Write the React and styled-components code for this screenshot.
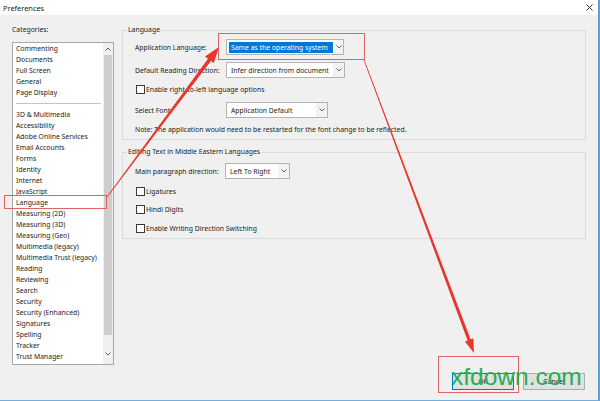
import React from 'react'
import styled, { createGlobalStyle } from 'styled-components'

const GlobalStyle = createGlobalStyle`
  html, body {
    margin: 0;
    padding: 0;
    background: #f0f0f0;
  }
  body {
    font-family: "Noto Sans", "Open Sans", sans-serif;
  }
`

const categories = [
  'Commenting', 'Documents', 'Full Screen', 'General', 'Page Display', '-',
  '3D & Multimedia', 'Accessibility', 'Adobe Online Services', 'Email Accounts',
  'Forms', 'Identity', 'Internet', 'JavaScript', 'Language', 'Measuring (2D)',
  'Measuring (3D)', 'Measuring (Geo)', 'Multimedia (legacy)',
  'Multimedia Trust (legacy)', 'Reading', 'Reviewing', 'Search', 'Security',
  'Security (Enhanced)', 'Signatures', 'Spelling', 'Tracker', 'Trust Manager', 'Units'
]

// tapered arrow, thin at the tail and wider towards the head
function arrowPoints(tail, tip, w0, w1, headLen, headW) {
  const dx = tip[0] - tail[0]
  const dy = tip[1] - tail[1]
  const len = Math.hypot(dx, dy)
  const ux = dx / len, uy = dy / len
  const nx = -uy, ny = ux
  const bx = tip[0] - ux * headLen, by = tip[1] - uy * headLen
  const p = (x, y) => `${x.toFixed(1)},${y.toFixed(1)}`
  return [
    p(tail[0] + nx * w0 / 2, tail[1] + ny * w0 / 2),
    p(bx + nx * w1 / 2, by + ny * w1 / 2),
    p(bx + nx * headW / 2, by + ny * headW / 2),
    p(tip[0], tip[1]),
    p(bx - nx * headW / 2, by - ny * headW / 2),
    p(bx - nx * w1 / 2, by - ny * w1 / 2),
    p(tail[0] - nx * w0 / 2, tail[1] - ny * w0 / 2)
  ].join(' ')
}

const Window = styled.div`
  position: relative;
  width: 600px;
  height: 401px;
  box-sizing: border-box;
  background: #f0f0f0;
  border-right: 2px solid #5e9fd8;
  border-bottom: 1px solid #72ade0;
  overflow: hidden;
  color: #1c1c1c;
  font-size: 6.85px;
`

const TitleBar = styled.div`
  height: 15px;
  background: #fff;
  display: flex;
  align-items: center;
  justify-content: space-between;
  padding: 0 5px 0 3px;
  font-size: 7.4px;
`

const Body = styled.div`
  display: grid;
  grid-template-columns: 102px 464px;
  column-gap: 8px;
  padding: 10px 0 0 12px;
`

const Caption = styled.div`
  height: 10px;
  line-height: 10px;
  margin-bottom: 7px;
`

const ListBox = styled.div`
  display: flex;
  height: 323px;
  box-sizing: border-box;
  border: 1px solid #a8a8a8;
  background: #fff;
`

const Items = styled.div`
  flex: 1;
  overflow: hidden;
  padding: 0 2px 0 3px;
`

const Item = styled.div`
  height: 11px;
  line-height: 11px;
  white-space: nowrap;
`

const Separator = styled.div`
  height: 11px;
  display: flex;
  align-items: center;
  &::after {
    content: '';
    flex: 1;
    height: 1px;
    background: #a9cbe4;
  }
`

const ScrollBar = styled.div`
  width: 10px;
  display: flex;
  flex-direction: column;
  background: #f0f0f0;
  padding-bottom: 4px;
`

const ScrollArrow = styled.div`
  height: 12px;
  display: flex;
  align-items: center;
  justify-content: center;
`

const Track = styled.div`
  flex: 1;
`

const Thumb = styled.div`
  height: 280px;
  margin: 0 1px;
  background: #cdcdcd;
`

const Main = styled.div`
  display: flex;
  flex-direction: column;
`

const Group = styled.fieldset`
  margin: ${p => p.$mt}px 0 0;
  padding: 0 4px ${p => p.$pb}px 4px;
  border: 1px solid #dadada;
  min-width: 0;
`

const Legend = styled.legend`
  padding: 0 1px;
  height: 10px;
  line-height: 10px;
`

const Row = styled.div`
  display: flex;
  align-items: center;
  height: 16px;
  margin-top: ${p => p.$mt}px;
  padding-left: 8px;
  white-space: nowrap;
`

const Label = styled.span`
  width: ${p => p.$w}px;
  flex: none;
`

const Select = styled.div`
  display: flex;
  width: ${p => p.$w}px;
  height: 16px;
  box-sizing: border-box;
  border: 1px solid #b4b4b4;
  background: #fff;
`

const SelectValue = styled.span`
  flex: 1;
  display: flex;
  align-items: center;
  padding: 2px 2px 1px 2px;
`

const Highlight = styled.span`
  display: flex;
  align-items: center;
  height: 100%;
  padding: 0 ${p => p.$pr}px 0 2px;
  background: ${p => (p.$on ? '#0078d7' : 'transparent')};
  color: ${p => (p.$on ? '#fff' : 'inherit')};
`

const SelectArrow = styled.span`
  width: 11px;
  display: flex;
  align-items: center;
  justify-content: center;
  background: #f2f2f2;
`

const Check = styled.span`
  width: 9px;
  height: 9px;
  box-sizing: border-box;
  margin: 0 1px 0 1px;
  border: 1px solid #3a3a3a;
  background: #fff;
  flex: none;
`

const Footer = styled.div`
  display: flex;
  justify-content: flex-end;
  gap: 9px;
  padding-right: 13px;
  margin-top: 8px;
`

const Button = styled.div`
  width: 62px;
  height: 17px;
  box-sizing: border-box;
  display: flex;
  align-items: center;
  justify-content: center;
  background: #e1e1e1;
  border: 1px solid ${p => (p.$primary ? '#0078d7' : '#adadad')};
`

const Overlay = styled.svg`
  position: absolute;
  left: 0;
  top: 0;
  pointer-events: none;
`

const Watermark = styled.div`
  position: absolute;
  left: 451px;
  top: 365px;
  font-family: "Liberation Sans", Arial, sans-serif;
  font-size: 24.5px;
  line-height: 24px;
  color: #27ad5a;
  pointer-events: none;
`

const Chevron = ({ up }) => (
  <svg width="6" height="4" viewBox="0 0 6 4">
    <path d={up ? 'M0.5 3.5 L3 1 L5.5 3.5' : 'M0.5 0.5 L3 3 L5.5 0.5'} fill="none" stroke="#555" strokeWidth="0.9" />
  </svg>
)

const Dropdown = ({ w, value, selected, pr = 2 }) => (
  <Select $w={w}>
    <SelectValue>
      <Highlight $on={selected} $pr={pr}>{value}</Highlight>
    </SelectValue>
    <SelectArrow><Chevron /></SelectArrow>
  </Select>
)

export default function App() {
  return (
    <>
      <GlobalStyle />
      <Window>
        <TitleBar>
          <span>Preferences</span>
          <svg width="7" height="7" viewBox="0 0 7 7">
            <path d="M0.5 0.5 L6.5 6.5 M6.5 0.5 L0.5 6.5" stroke="#222" strokeWidth="0.9" />
          </svg>
        </TitleBar>

        <Body>
          <div>
            <Caption>Categories:</Caption>
            <ListBox>
              <Items>
                {categories.map((c, i) =>
                  c === '-' ? <Separator key={i} /> : <Item key={i}>{c}</Item>
                )}
              </Items>
              <ScrollBar>
                <ScrollArrow><Chevron up /></ScrollArrow>
                <Track><Thumb /></Track>
                <ScrollArrow><Chevron /></ScrollArrow>
              </ScrollBar>
            </ListBox>
          </div>

          <Main>
            <Group $mt={0} $pb={2}>
              <Legend>Language</Legend>
              <Row $mt={4}>
                <Label $w={91}>Application Language:</Label>
                <Dropdown w={118} value="Same as the operating system" selected pr={5} />
              </Row>
              <Row $mt={7}>
                <Label $w={91}>Default Reading Direction:</Label>
                <Dropdown w={119} value="Infer direction from document" />
              </Row>
              <Row $mt={3}>
                <Check />
                <span>Enable right-to-left language options</span>
              </Row>
              <Row $mt={5}>
                <Label $w={91}>Select Font:</Label>
                <Dropdown w={102} value="Application Default" />
              </Row>
              <Row $mt={3}>
                Note: The application would need to be restarted for the font change to be reflected.
              </Row>
            </Group>

            <Group $mt={7} $pb={2}>
              <Legend>Editing Text in Middle Eastern Languages</Legend>
              <Row $mt={6}>
                <Label $w={90}>Main paragraph direction:</Label>
                <Dropdown w={65} value="Left To Right" />
              </Row>
              <Row $mt={4}>
                <Check />
                <span>Ligatures</span>
              </Row>
              <Row $mt={2}>
                <Check />
                <span>Hindi Digits</span>
              </Row>
              <Row $mt={3}>
                <Check />
                <span>Enable Writing Direction Switching</span>
              </Row>
            </Group>
          </Main>
        </Body>

        <Footer>
          <Button $primary>OK</Button>
          <Button>Cancel</Button>
        </Footer>

        <Overlay width="600" height="401" viewBox="0 0 600 401">
          <g fill="none" stroke="#e06464" strokeWidth="1">
            <rect x="4.5" y="195.5" width="102" height="13" />
            <rect x="218.5" y="33.5" width="146" height="26" />
            <rect x="438.5" y="356.5" width="80" height="36" />
          </g>
          <g fill="#e8362c">
            <polygon points={arrowPoints([107, 197], [219, 47], 0.8, 3.6, 16, 11)} />
            <polygon points={arrowPoints([364, 60], [474, 353], 0.8, 3.2, 14, 9)} />
          </g>
        </Overlay>

        <Watermark>xfdown.com</Watermark>
      </Window>
    </>
  )
}
